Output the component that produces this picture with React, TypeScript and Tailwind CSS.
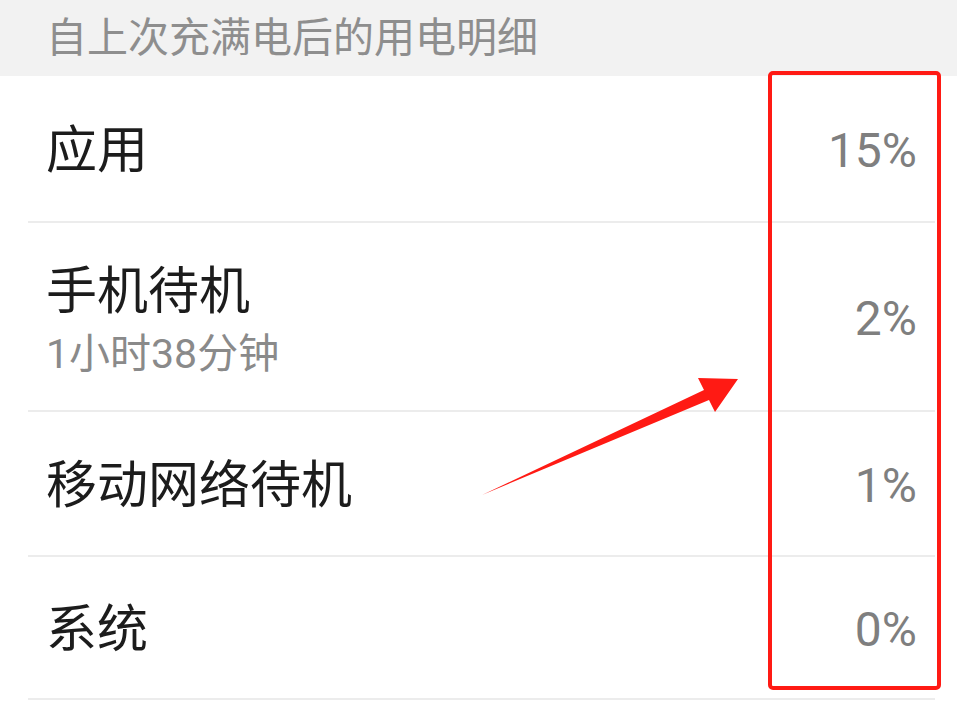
const font = { fontFamily: "Roboto, 'Noto Sans CJK SC', sans-serif" };

type Row = { title: string; sub?: string; value: string; h: string };

const rows: Row[] = [
  { title: "应用", value: "15%", h: "h-[147px]" },
  { title: "手机待机", sub: "1小时38分钟", value: "2%", h: "h-[189px]" },
  { title: "移动网络待机", value: "1%", h: "h-[145px]" },
  { title: "系统", value: "0%", h: "h-[143px]" },
];

export default function App() {
  return (
    <div className="relative w-[957px] h-[705px] overflow-hidden bg-white" style={font}>
      {/* Section header */}
      <div className="h-[76px] bg-[#f2f2f2] flex items-center pl-[46px]">
        <span className="text-[41px] leading-none text-[#8e8e8e]">自上次充满电后的用电明细</span>
      </div>

      {/* Rows */}
      <div className="flex flex-col">
        {rows.map((r) => (
          <div
            key={r.title}
            className={`${r.h} ml-[28px] mr-[22px] border-b-2 border-[#ececec] flex items-center justify-between pl-[18px] pr-[18px]`}
          >
            <div className="flex flex-col pt-[4px]">
              <span className="text-[51px] leading-[60px] text-[#1c1c1c]">{r.title}</span>
              {r.sub && (
                <span className="mt-[10px] text-[41px] leading-[44px] text-[#8a8a8a]">{r.sub}</span>
              )}
            </div>
            <span className="text-[48px] leading-none text-[#7f7f7f] pt-[4px]">{r.value}</span>
          </div>
        ))}
      </div>

      {/* Red highlight box */}
      <div className="absolute left-[768px] top-[71px] w-[173px] h-[619px] border-[4px] border-[#ff1a14] rounded-[5px]" />

      {/* Red arrow */}
      <svg className="absolute left-0 top-0" width="957" height="705" viewBox="0 0 957 705">
        <polygon
          points="482,495 704,390 698,378 738,379 715,412 709,400"
          fill="#ff1a14"
        />
      </svg>
    </div>
  );
}
